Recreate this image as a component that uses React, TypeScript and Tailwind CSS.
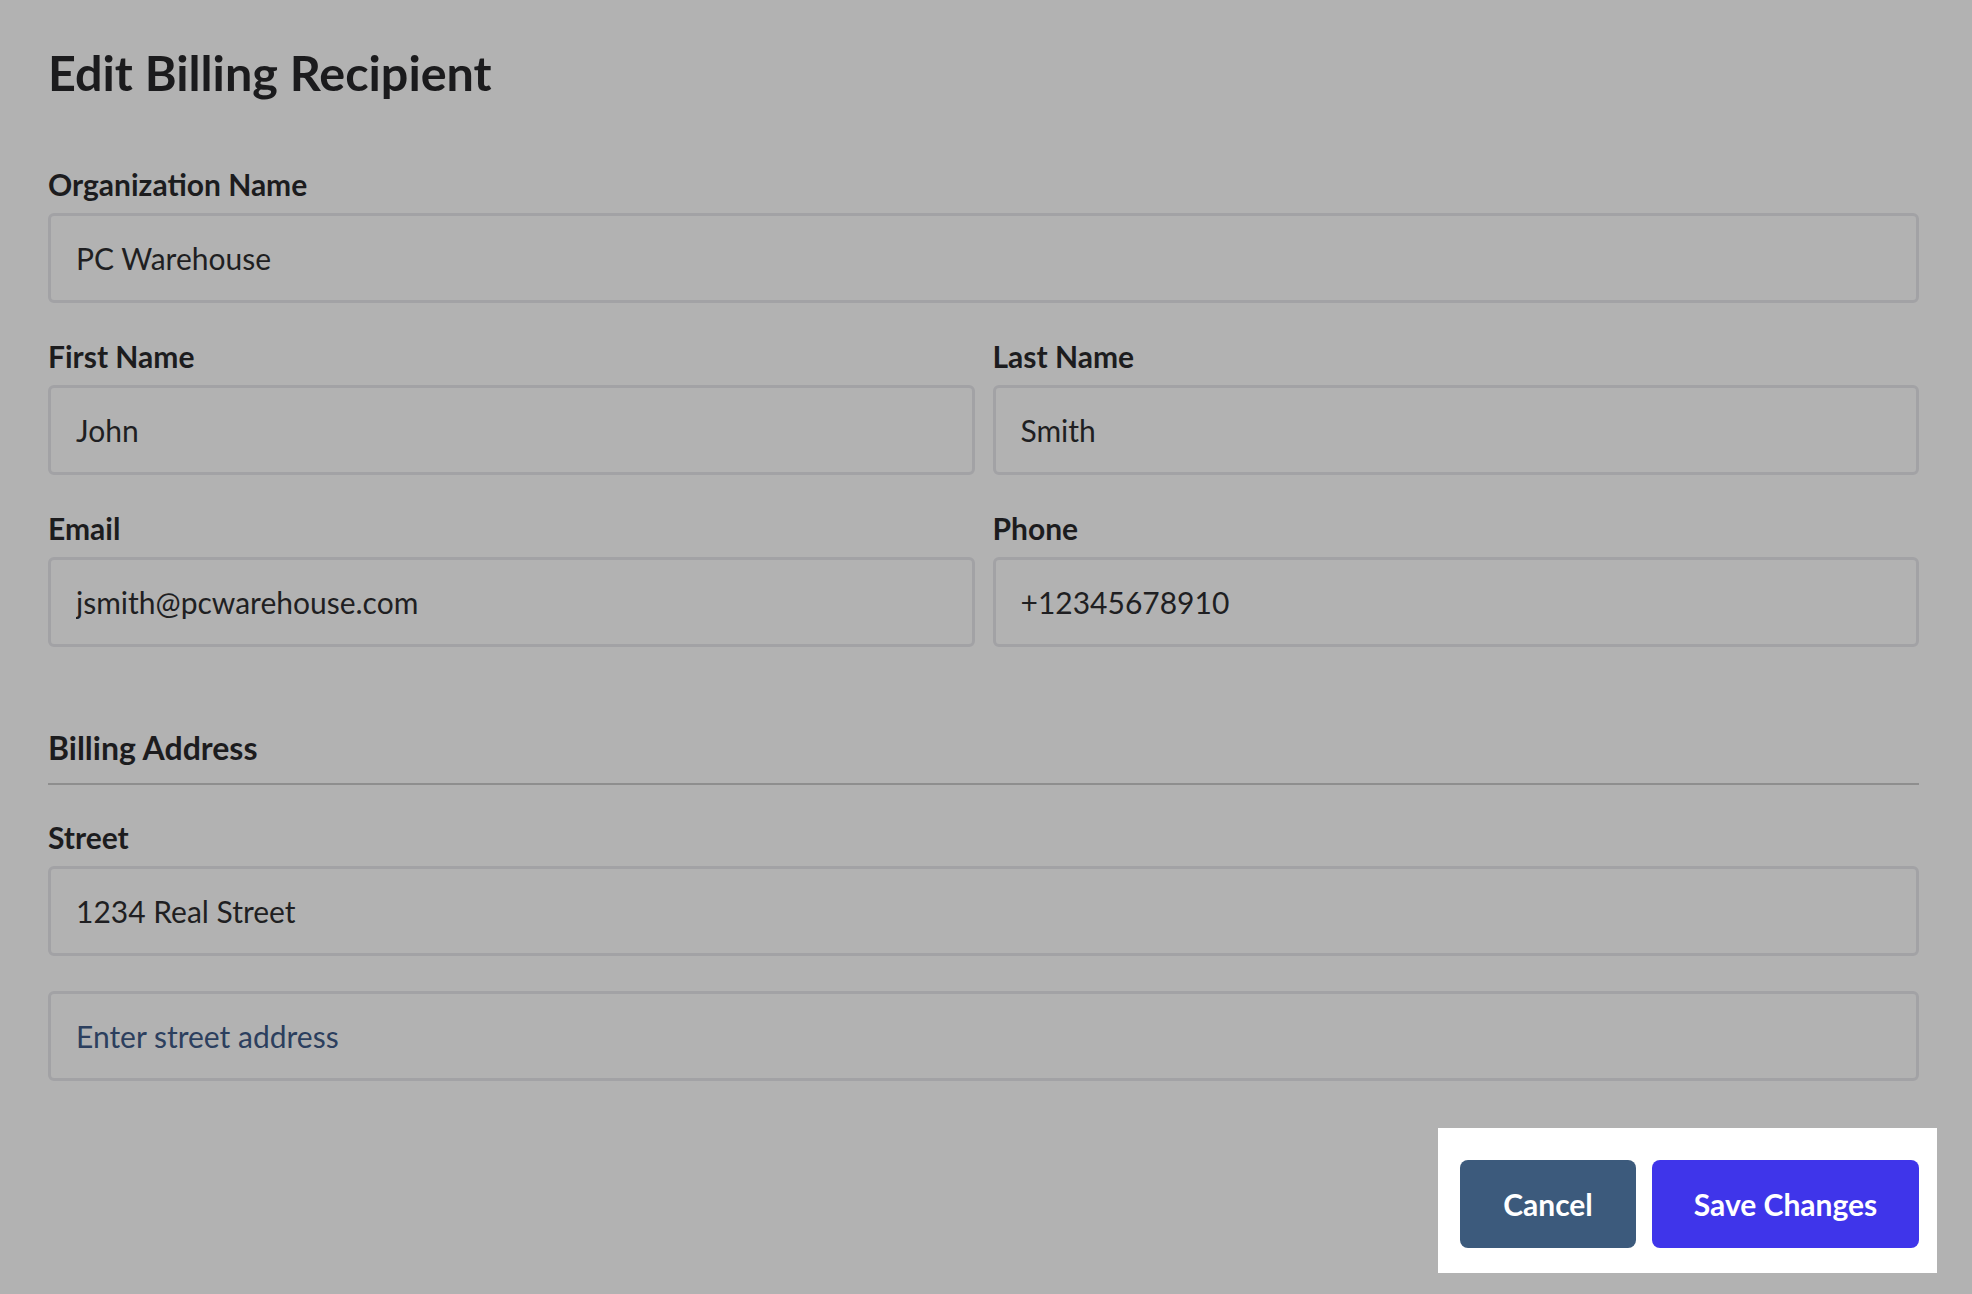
import React from "react";

function Field({ label, value, placeholder }: { label?: string; value?: string; placeholder?: string }) {
  return (
    <div>
      {label && <label className="block text-[30px] leading-[28px] font-bold text-[#1c1c1e]">{label}</label>}
      <input
        readOnly
        defaultValue={value}
        placeholder={placeholder}
        className={
          "block w-full h-[90px] border-[3px] border-[#a2a2a5] rounded-md bg-transparent px-[25px] text-[30px] text-[#1f1f22] outline-none placeholder:text-[#2c3f5e] placeholder:opacity-100" +
          (label ? " mt-[15px]" : "")
        }
      />
    </div>
  );
}

export default function App() {
  return (
    <div className="min-h-screen bg-[#b2b2b2] pt-12 pl-12 pr-[53px] font-['Lato',sans-serif]">
      <h1 className="text-[48.5px] leading-[48px] font-bold text-[#1b1b1d]">Edit Billing Recipient</h1>

      <div className="mt-[74px] space-y-[39px]">
        <Field label="Organization Name" value="PC Warehouse" />
        <div className="grid grid-cols-2 gap-x-[18px] gap-y-[39px]">
          <Field label="First Name" value="John" />
          <Field label="Last Name" value="Smith" />
          <Field label="Email" value="jsmith@pcwarehouse.com" />
          <Field label="Phone" value="+12345678910" />
        </div>
      </div>

      <div className="mt-[86px] border-b-2 border-[#8e8e8e] pb-5">
        <h2 className="text-[32px] leading-[30px] font-bold text-[#1c1c1e]">Billing Address</h2>
      </div>

      <div className="mt-[38px] space-y-[35px]">
        <Field label="Street" value="1234 Real Street" />
        <Field placeholder="Enter street address" />
      </div>

      <div className="mt-[47px] flex justify-end">
        <div className="-mr-[18px] flex gap-4 bg-white pl-[22px] pr-[18px] pt-8 pb-[25px]">
          <button className="h-[88px] w-[176px] rounded-lg bg-[#3c5a7c] text-[30px] font-bold text-white">Cancel</button>
          <button className="h-[88px] w-[267px] rounded-lg bg-[#3f35ea] text-[30px] font-bold text-white">Save Changes</button>
        </div>
      </div>
    </div>
  );
}
